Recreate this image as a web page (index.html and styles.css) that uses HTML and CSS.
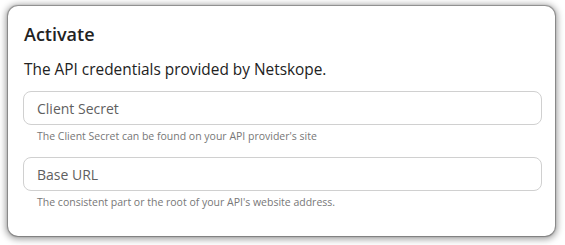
FILE: index.html
```html
<!DOCTYPE html>
<html lang="en">
<head>
    <meta charset="UTF-8">
    <meta name="viewport" content="width=device-width, initial-scale=1.0">
    <title>Activate</title>
    <link rel="stylesheet" href="styles.css">
</head>
<body>
    <div class="card">
        <h2 class="title">Activate</h2>
        <p class="intro">The API credentials provided by Netskope.</p>
        <div class="field">
            <input class="input" type="text" placeholder="Client Secret">
            <p class="hint">The Client Secret can be found on your API provider's site</p>
        </div>
        <div class="field">
            <input class="input" type="text" placeholder="Base URL">
            <p class="hint">The consistent part or the root of your API's website address.</p>
        </div>
    </div>
</body>
</html>
```

FILE: styles.css
```css
body {
    margin: 0;
    padding: 6px 10px 9px 8px;
    background: #ffffff;
    font-family: "Open Sans", "Noto Sans", sans-serif;
}
.card {
    height: 230px;
    box-sizing: border-box;
    padding: 16px 13px 0 15px;
    background: #ffffff;
    border-radius: 10px;
    box-shadow: 0 0 1px 1px rgba(0, 0, 0, 0.3), 0 1px 7px 2px rgba(0, 0, 0, 0.4);
}
.title {
    margin: 0 0 0 1px;
    font-size: 18px;
    font-weight: 600;
    line-height: 24px;
    color: #222;
}
.intro {
    margin: 14px 0 11px 1px;
    font-size: 15.4px;
    line-height: 20px;
    color: #222;
}
.field {
    margin-bottom: 13px;
}
.input {
    display: block;
    width: 100%;
    height: 34px;
    box-sizing: border-box;
    padding: 0 13px;
    border: 1px solid #d0d0d0;
    border-radius: 8px;
    font-family: inherit;
    font-size: 14px;
    color: #333;
    background: #fff;
}
.input::placeholder {
    color: #5f5f5f;
}
.hint {
    margin: 3px 0 0 14px;
    font-size: 10.5px;
    line-height: 16px;
    color: #777;
}
```
